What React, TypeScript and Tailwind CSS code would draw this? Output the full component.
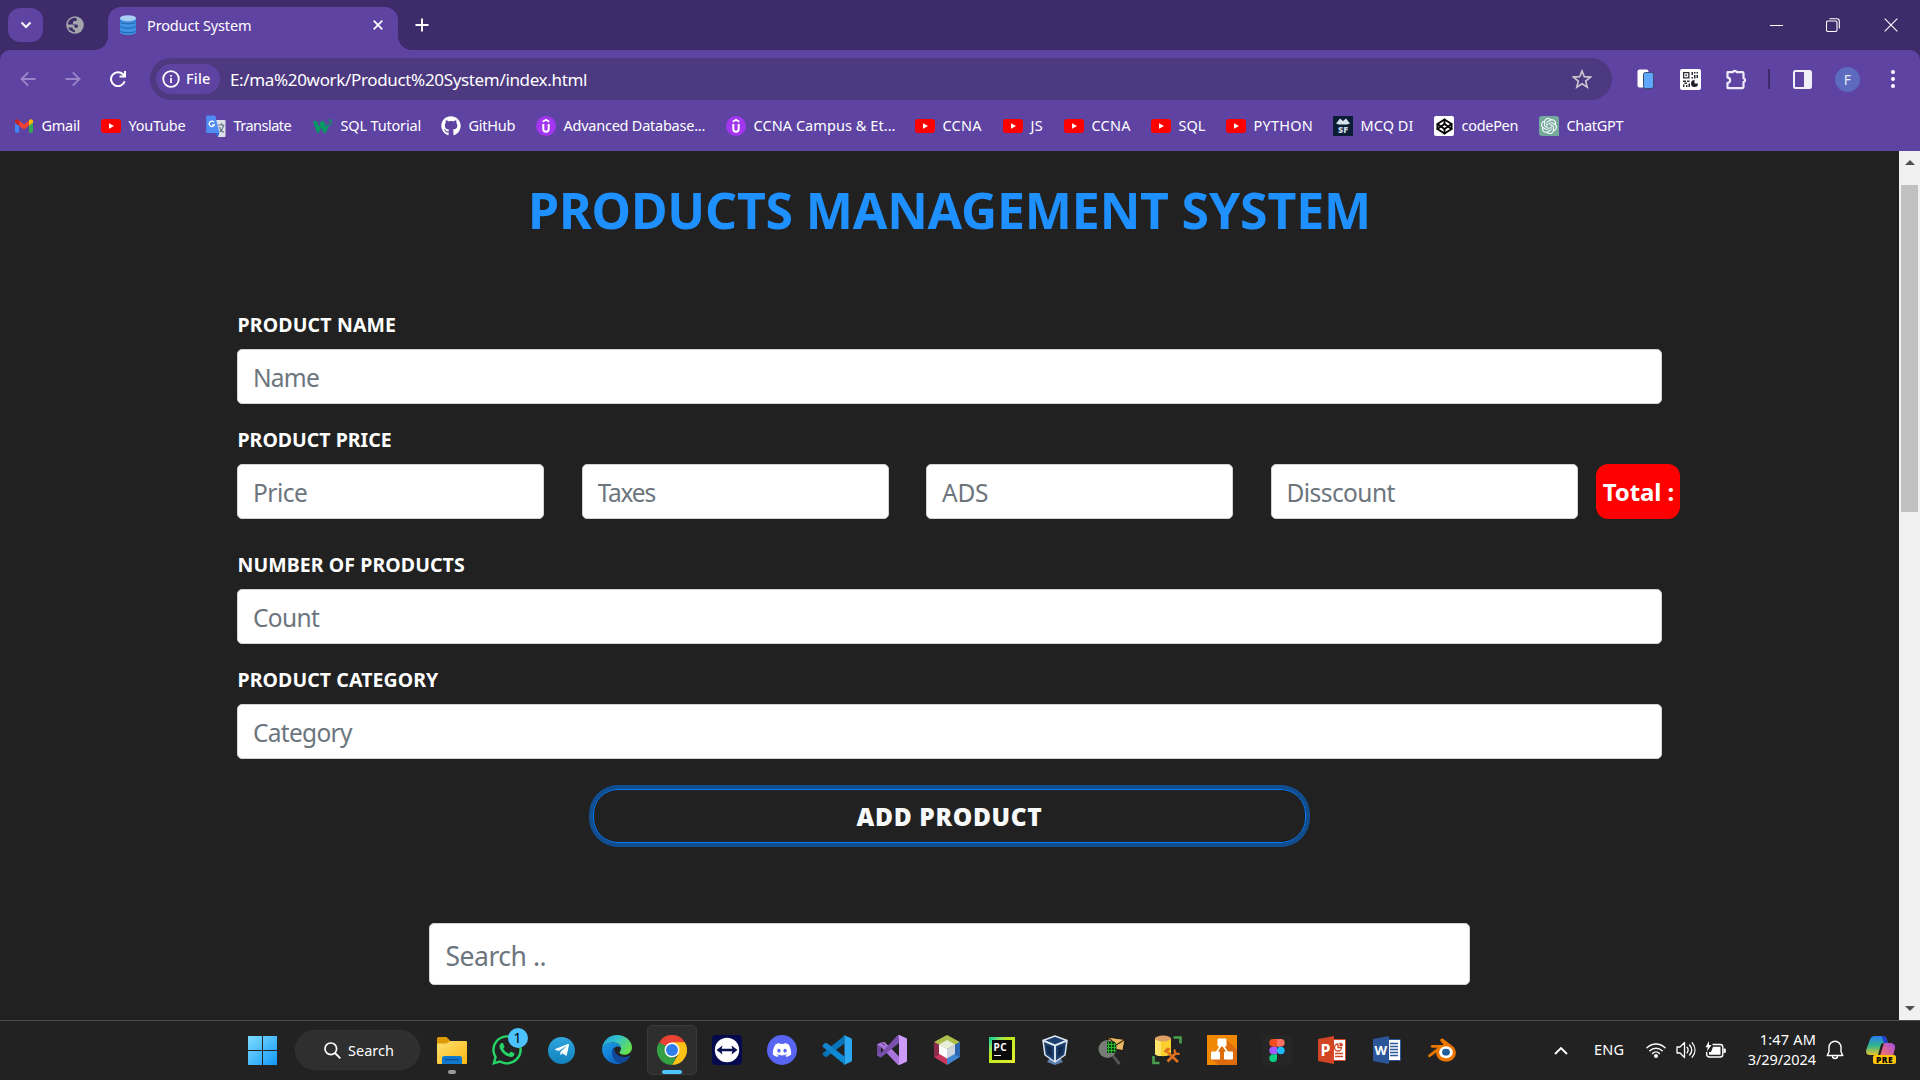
import type { ReactNode } from "react";
import { FaDiscord, FaGithub, FaTelegramPlane, FaWhatsapp } from "react-icons/fa";
import { SiOpenai } from "react-icons/si";
import { FiCodepen } from "react-icons/fi";

/* ---------- Bookmark icons ---------- */

const GmailIcon = () => (
  <svg viewBox="52 42 88 66" className="mr-px ml-px h-3.5 w-[18px]">
    <path fill="#4285f4" d="M58 108h14V74L52 59v43c0 3.32 2.69 6 6 6" />
    <path fill="#34a853" d="M120 108h14c3.32 0 6-2.69 6-6V59l-20 15" />
    <path fill="#fbbc04" d="M120 48v26l20-15v-8c0-7.42-8.47-11.65-14.4-7.2" />
    <path fill="#ea4335" d="M72 74V48l24 18 24-18v26L96 92" />
    <path fill="#c5221f" d="M52 51v8l20 15V48l-5.6-4.2c-5.94-4.45-14.4-.22-14.4 7.2" />
  </svg>
);

const YouTubeIcon = () => (
  <svg viewBox="0 0 20 14" className="h-3.5 w-5">
    <rect width="20" height="14" rx="3" fill="#ff0000" />
    <path d="M8 4.2v5.6L13 7z" fill="#fff" />
  </svg>
);

const TranslateIcon = () => (
  <svg viewBox="0 0 20 22" className="h-[22px] w-5">
    <path d="M8 5h10.5a1 1 0 0 1 1 1v15a1 1 0 0 1-1 1H12z" fill="#dfe3e8" />
    <path d="M9 18h4.5L12 22z" fill="#3367d6" />
    <path d="M12 10h6.500M15.500 8v2M17.600 10c-.5 3.500-2.400 5.500-4 6.500M13.300 12c.8 2.500 2.700 4.500 4.700 5.500" stroke="#6b7a87" strokeWidth="1.200" fill="none" />
    <path d="M1.200 0.500h8L13.500 18H1.200A1 1 0 0 1 .2 17V1.500a1 1 0 0 1 1-1z" fill="#4f8df5" />
    <path d="M8 7.200A2.700 2.700 0 1 0 8.400 9.800H6" stroke="#fff" strokeWidth="1.300" fill="none" />
  </svg>
);

const W3Icon = () => (
  <svg viewBox="0 0 20 17" className="h-[17px] w-5">
    <path d="M0 3h4l1.800 6L8 3h3l2 6 1-2.500 1.800 2L12.800 15h-2.300L8.300 9.500 5.800 15H4z" fill="#059862" />
    <path d="M15 2h3.500l-1.600 2c2.400 0 2.200 3-.2 3-1 0-1.700-.4-1.900-1" stroke="#059862" strokeWidth="1.100" fill="none" />
  </svg>
);

const UdemyIcon = () => (
  <svg viewBox="0 0 20 20" className="size-5">
    <circle cx="10" cy="10" r="10" fill="#a435f0" />
    <path d="M6.700 5.700 10 3.700l3.300 2" stroke="#fff" strokeWidth="1.700" fill="none" />
    <path d="M7.300 8v5a2.700 2.700 0 0 0 5.400 0V8" stroke="#fff" strokeWidth="2" fill="none" />
  </svg>
);

const McqIcon = () => (
  <span className="flex size-5 flex-col items-center justify-end bg-[#0b1d35] pb-[2px]">
    <svg viewBox="0 0 14 7" className="h-[7px] w-3.5">
      <path d="M0 5.500 4 .5l3 2.500 3-2.500 4 5-3 1H3z" fill="#d5e2ec" />
    </svg>
    <span className="text-[9px] leading-[9px] font-black text-[#c9d8e4]">SF</span>
  </span>
);

const CodepenIcon = () => (
  <span className="flex size-5 items-center justify-center rounded-[2px] bg-white text-black">
    <FiCodepen size={17} strokeWidth={2.600} />
  </span>
);

const ChatGptIcon = () => (
  <span className="flex size-5 items-center justify-center rounded-[3px] rounded-br-none bg-[#74aa9c] text-white">
    <SiOpenai size={16} />
  </span>
);

const bookmarks: { label: string; icon: ReactNode; box: string; track: string }[] = [
  { label: "Gmail", icon: <GmailIcon />, box: "w-[87px]", track: "tracking-[-0.25px]" },
  { label: "YouTube", icon: <YouTubeIcon />, box: "w-[105px]", track: "tracking-[-0.24px]" },
  { label: "Translate", icon: <TranslateIcon />, box: "w-[107px]", track: "tracking-[-0.52px]" },
  { label: "SQL Tutorial", icon: <W3Icon />, box: "w-[128px]", track: "tracking-[-0.17px]" },
  { label: "GitHub", icon: <FaGithub size={20} />, box: "w-[95px]", track: "tracking-[-0.25px]" },
  { label: "Advanced Database...", icon: <UdemyIcon />, box: "w-[190px]", track: "tracking-[-0.24px]" },
  { label: "CCNA Campus & Et...", icon: <UdemyIcon />, box: "w-[189px]", track: "tracking-[0.06px]" },
  { label: "CCNA", icon: <YouTubeIcon />, box: "w-[88px]", track: "tracking-[0.25px]" },
  { label: "JS", icon: <YouTubeIcon />, box: "w-[61px]", track: "tracking-[0.2px]" },
  { label: "CCNA", icon: <YouTubeIcon />, box: "w-[87px]", track: "tracking-[0.25px]" },
  { label: "SQL", icon: <YouTubeIcon />, box: "w-[75px]", track: "tracking-[0px]" },
  { label: "PYTHON", icon: <YouTubeIcon />, box: "w-[107px]", track: "tracking-[0.25px]" },
  { label: "MCQ DI", icon: <McqIcon />, box: "w-[101px]", track: "tracking-[0.06px]" },
  { label: "codePen", icon: <CodepenIcon />, box: "w-[105px]", track: "tracking-[-0.3px]" },
  { label: "ChatGPT", icon: <ChatGptIcon />, box: "w-[105px]", track: "tracking-[-0.3px]" },
];

/* ---------- Browser chrome ---------- */

function TabStrip() {
  return (
    <div className="flex h-[50px] items-start bg-[#3d2c69]">
      <button className="mt-2 ml-2 flex h-[34px] w-[35px] items-center justify-center rounded-xl bg-[#5e43a3]">
        <svg viewBox="0 0 12 8" className="h-2 w-3">
          <path d="M1.500 1.500 6 6l4.500-4.500" stroke="#fff" strokeWidth="2" fill="none" />
        </svg>
      </button>
      <svg viewBox="0 0 18 18" className="mt-4 ml-[23px] size-[18px]">
        <circle cx="9" cy="9" r="8.800" fill="#a3a5ab" />
        <path d="M9.800 1.800C5.500 1.400 1.900 4.700 1.800 8.500h4.500c1.500 0 2.300.8 2.300 2.200v1.100h1.800c1 0 1.500-.6 1.500-1.500V9.200c-.3-.6-.9-.8-1.500-.8H8.600c-1.200 0-1.700-.6-1.700-1.500 0-1.300.8-1.800 1.900-1.800h.6c1 0 1.400-.5 1.400-1.300 0-.5-.3-1.400-1-2z" fill="#3d2c69" />
        <path d="M2.200 11.500c1.200 2.800 3.600 4.600 6.800 4.700v-2c-1.600 0-2.500-.7-2.500-2.700z" fill="#3d2c69" />
      </svg>
      <div className="relative mt-[7px] ml-6 flex h-[43px] w-[290px] items-center rounded-t-[13px] bg-[#5e43a3] pb-[7px]">
        <svg viewBox="0 0 14 14" className="absolute bottom-0 -left-3.5 size-3.5">
          <path d="M14 0v14H0A14 14 0 0 0 14 0z" fill="#5e43a3" />
        </svg>
        <svg viewBox="0 0 14 14" className="absolute -right-3.5 bottom-0 size-3.5">
          <path d="M0 0v14h14A14 14 0 0 1 0 0z" fill="#5e43a3" />
        </svg>
        <svg viewBox="0 0 16 20" className="ml-3 h-5 w-4">
          <path d="M0 3v14c0 4 16 4 16 0V3z" fill="#3f92e2" />
          <path d="M0 6.500c1 3 15 3 16 0M0 11c1 3 15 3 16 0M0 15.500c1 3 15 3 16 0" stroke="#1f62ae" fill="none" />
          <ellipse cx="8" cy="3.200" rx="8" ry="3" fill="#a9cdf3" />
        </svg>
        <span className="mt-px ml-[11px] w-[215px] text-[14.5px] tracking-[-0.14px] whitespace-nowrap">Product System</span>
        <svg viewBox="0 0 10 10" className="ml-[10.500px] size-[10px]">
          <path d="M.7.7l8.600 8.600M9.300.7.7 9.300" stroke="#fff" strokeWidth="1.700" />
        </svg>
      </div>
      <svg viewBox="0 0 14 14" className="mt-[18px] ml-[17px] size-3.5">
        <path d="M7 .5v13M.5 7h13" stroke="#fff" strokeWidth="1.900" />
      </svg>
      <div className="ml-auto flex h-[50px] items-center">
        <svg viewBox="0 0 13 13" className="mr-[43px] size-[13px]">
          <path d="M0 6.500h13" stroke="#fff" />
        </svg>
        <svg viewBox="0 0 14 14" className="mr-[44px] size-3.5">
          <rect x=".5" y="3" width="10.500" height="10.500" rx="1.500" stroke="#fff" strokeWidth="1.100" fill="none" />
          <path d="M3.500.7H11A2.300 2.300 0 0 1 13.300 3v7.500" stroke="#fff" strokeWidth="1.100" fill="none" />
        </svg>
        <svg viewBox="0 0 14 14" className="mr-[22px] size-3.5">
          <path d="M.7.7l12.600 12.600M13.300.7.7 13.300" stroke="#fff" strokeWidth="1.100" />
        </svg>
      </div>
    </div>
  );
}

const QrIcon = () => (
  <svg viewBox="0 0 21 21" className="ml-[26px] size-[21px]">
    <rect width="21" height="21" rx="2" fill="#fff" />
    <path d="M3 3h6.500v6.500H3zM4.300 4.300v3.900h3.900V4.300zM5.500 5.500H7V7H5.500zM11.500 3h1.500v3h-1.500zM14 3h1.500v1.500H14zM16.500 3H18v1.500h-1.500zM14 6h1.500v3.500H14zM11.500 8H13v1.500h-1.500zM16.500 6H18v3h-1.500zM3 11.500h3V13H3zM7 11.500h2.500V13H7zM4.500 13.500h2.500V15H4.500zM3 15.500h1.500V18H3zM6 16h1.500v2H6zM8.500 14.500H10V18H8.500z" fill="#2b2f33" fillRule="evenodd" />
    <path d="M14.500 11v3.500H18a3.500 3.500 0 1 1-3.500-3.500z" fill="#1d1f22" />
  </svg>
);

function Toolbar() {
  return (
    <div className="bg-[#3d2c69]">
      <div className="rounded-t-[10px] bg-[#5e43a3]">
        <div className="flex h-[58px] items-center">
          <svg viewBox="0 0 16 16" className="ml-5 size-4">
            <path d="M15.500 8H1.500M8.200 1.300 1.500 8l6.700 6.700" stroke="#9985c9" strokeWidth="1.900" fill="none" />
          </svg>
          <svg viewBox="0 0 16 16" className="ml-[28.500px] size-4">
            <path d="M.5 8h14M7.800 1.300 14.500 8l-6.700 6.700" stroke="#9985c9" strokeWidth="1.900" fill="none" />
          </svg>
          <svg viewBox="0 0 16 16" className="ml-[29px] size-4">
            <path d="M14.700 10.300A7 7 0 1 1 13 3.200l1.700 1.700" stroke="#fff" strokeWidth="2" fill="none" />
            <path d="M16 0v6.500H9.500v-2H14V0z" fill="#fff" />
          </svg>
          <div className="ml-[24.500px] flex h-[42px] w-[1462px] items-center rounded-full bg-[#4c397f]">
            <div className="ml-1.5 flex h-[30px] w-16 items-center rounded-full bg-[#5e43a3]">
              <svg viewBox="0 0 18 18" className="ml-1.5 size-[18px]">
                <circle cx="9" cy="9" r="7.800" stroke="#fff" strokeWidth="1.800" fill="none" />
                <path d="M9 8v5M9 5v1.700" stroke="#fff" strokeWidth="1.700" />
              </svg>
              <span className="ml-[6px] text-[14.5px] font-medium tracking-[0.17px]">File</span>
            </div>
            <span className="mt-px ml-[10px] text-[17px] tracking-[-0.34px]">E:/ma%20work/Product%20System/index.html</span>
            <svg viewBox="0 0 20 20" className="mr-5 ml-auto size-5">
              <path d="m10 2 2.300 5.700 6.200.4-4.800 4 1.500 6L10 14.800l-5.200 3.300 1.500-6-4.800-4 6.200-.4z" stroke="#c9c4cf" strokeWidth="1.700" fill="none" />
            </svg>
          </div>
          <svg viewBox="0 0 17 20" className="ml-[25px] h-5 w-[17px]">
            <rect x=".5" y=".5" width="11" height="18" rx="2" fill="#fff" />
            <rect x="6.500" y="3.500" width="10" height="16" rx="2" fill="#5ea7fa" stroke="#3c4a6e" />
          </svg>
          <QrIcon />
          <svg viewBox="0 0 22 22" className="ml-6 size-[22px]">
            <path d="M2.500 4.200h5.300a2 2 0 0 1 3.800 0H17.500a1 1 0 0 1 1 1v5a2 2 0 0 1 0 3.900v5a1 1 0 0 1-1 1H2.500v-5.300a2.600 2.600 0 0 0 0-5.200z" stroke="#eeeaf6" strokeWidth="2.200" fill="none" strokeLinejoin="round" />
          </svg>
          <span className="ml-[21px] h-5 w-0.5 bg-[#3d2c69]" />
          <svg viewBox="0 0 19 19" className="ml-[23px] size-[19px]">
            <rect x="1" y="1" width="17" height="17" rx="1.500" stroke="#f1eff7" strokeWidth="2" fill="none" />
            <path d="M11 1h7v17h-7z" fill="#f1eff7" />
          </svg>
          <span className="ml-[23px] flex size-[25px] items-center justify-center rounded-full bg-[#5c6bc0] text-[14px] text-[#e6e8f8]">F</span>
          <svg viewBox="0 0 4 18" className="ml-[30.500px] h-[18px] w-1">
            <circle cx="2" cy="2" r="2" fill="#fff" />
            <circle cx="2" cy="9" r="2" fill="#fff" />
            <circle cx="2" cy="16" r="2" fill="#fff" />
          </svg>
        </div>
        <div className="flex h-[43px] items-center pb-[7px] pl-[14px] text-[14.5px]">
          {bookmarks.map((b, i) => (
            <div key={i} className={`flex shrink-0 items-center gap-[7.5px] whitespace-nowrap ${b.box}`}>
              {b.icon}
              <span className={b.track}>{b.label}</span>
            </div>
          ))}
        </div>
      </div>
    </div>
  );
}

/* ---------- Web page ---------- */

const inputBase =
  "block h-[55px] rounded-[5px] border border-[#ced4da] bg-white pt-[2px] pl-[15px] text-[24.5px] text-[#495057] outline-none placeholder:text-[#6c757d] placeholder:opacity-100";

function Label({ children, track }: { children: ReactNode; track: string }) {
  return <label className={`mb-[9px] block pt-px pl-[0.5px] text-[19.5px] leading-[30px] font-bold text-white ${track}`}>{children}</label>;
}

const priceFields = [
  { name: "Price", track: "tracking-[-0.51px]" },
  { name: "Taxes", track: "tracking-[-1.2px]" },
  { name: "ADS", track: "tracking-[-0.27px]" },
  { name: "Disscount", track: "tracking-[-0.57px]" },
];

function Page() {
  return (
    <main className="flex flex-1 flex-col bg-[#212121]">
      <h1 className="mt-[29px] text-center text-[50px] leading-[61px] font-bold tracking-[-0.18px] text-[#1e90ff]">
        PRODUCTS MANAGEMENT SYSTEM
      </h1>
      <form className="mx-auto mt-[68px] w-[1425px]">
        <Label track="tracking-[0.15px]">PRODUCT NAME</Label>
        <input placeholder="Name" className={`w-full tracking-[-0.76px] ${inputBase}`} />
        <div className="h-5" />
        <Label track="tracking-[0px]">PRODUCT PRICE</Label>
        <div className="-mr-[18px] flex">
          {priceFields.map((f) => (
            <input key={f.name} placeholder={f.name} className={`mr-[37.5px] w-[307px] shrink-0 last-of-type:mr-[18px] ${f.track} ${inputBase}`} />
          ))}
          <div className="flex h-[55px] w-[84px] shrink-0 items-center justify-center rounded-xl bg-[#ff0000] pl-[2px] text-[24px] font-bold tracking-[-0.1px] whitespace-nowrap text-white">
            Total :
          </div>
        </div>
        <div className="h-[30px]" />
        <Label track="tracking-[0.08px]">NUMBER OF PRODUCTS</Label>
        <input placeholder="Count" className={`w-full tracking-[-0.65px] ${inputBase}`} />
        <div className="h-5" />
        <Label track="tracking-[0.08px]">PRODUCT CATEGORY</Label>
        <input placeholder="Category" className={`w-full tracking-[-0.7px] ${inputBase}`} />
        <button
          type="button"
          className="mx-auto mt-[30px] block h-[54px] w-[713px] rounded-[25px] border border-[#007bff] pt-[2px] text-[24.5px] font-black tracking-[0.65px] text-[#f8f9fa] shadow-[0_0_0_4px_rgba(0,123,255,0.5)]"
        >
          ADD PRODUCT
        </button>
      </form>
      <input
        placeholder="Search .."
        className="mx-auto mt-[80px] block h-[62px] w-[1041px] rounded-[5px] border border-[#ced4da] bg-white pt-[3px] pl-[15.500px] text-[26.5px] tracking-[-0.48px] outline-none placeholder:text-[#6c757d] placeholder:opacity-100"
      />
    </main>
  );
}

function Scrollbar() {
  return (
    <div className="flex w-[21px] flex-col items-center bg-[#f1f1f1]">
      <svg viewBox="0 0 10 5" className="mt-[9px] h-[5px] w-[10px]">
        <path d="M0 5 5 0l5 5z" fill="#505050" />
      </svg>
      <div className="mt-5 h-[327px] w-[17px] bg-[#c1c1c1]" />
      <svg viewBox="0 0 10 5" className="mt-auto mb-[9px] h-[5px] w-[10px]">
        <path d="M0 0h10L5 5z" fill="#505050" />
      </svg>
    </div>
  );
}

/* ---------- Taskbar icons ---------- */

const FolderIcon = () => (
  <svg viewBox="0 0 30 27" className="h-[27px] w-[30px]">
    <defs>
      <linearGradient id="folder" x1="0" y1="0" x2="1" y2="1">
        <stop offset="0" stopColor="#ffdf70" />
        <stop offset="1" stopColor="#fbb912" />
      </linearGradient>
    </defs>
    <path d="M0 1.500A1.500 1.500 0 0 1 1.500 0h8l3.500 3.500V12H0z" fill="#dd9a07" />
    <path d="M0 6.500h9.500L13 4h16a1 1 0 0 1 1 1v21a1 1 0 0 1-1 1H1a1 1 0 0 1-1-1z" fill="url(#folder)" />
    <path d="M5 27v-5.500A2.500 2.500 0 0 1 7.500 19h15a2.500 2.500 0 0 1 2.500 2.500V27z" fill="#1178cf" />
    <path d="M8.500 22.700h13" stroke="#0b4f94" strokeWidth="1.200" strokeLinecap="round" />
  </svg>
);

const WhatsAppIcon = () => (
  <span className="relative">
    <FaWhatsapp size={34} color="#25d366" />
    <span className="absolute -top-[5px] left-[18px] flex size-5 items-center justify-center rounded-full bg-[#4cc2ff] text-[14px] leading-none text-black">1</span>
  </span>
);

const TelegramIcon = () => (
  <span className="flex size-[27px] items-center justify-center rounded-full bg-[#1f93d1] bg-gradient-to-b from-[#2fa6dd] to-[#1181bd]">
    <FaTelegramPlane size={16} color="#fff" />
  </span>
);

const EdgeIcon = () => (
  <svg viewBox="0 0 30 30" className="size-[30px]">
    <defs>
      <linearGradient id="edge-top" x1="0" y1="0" x2="1" y2=".5">
        <stop offset="0" stopColor="#1f9de0" />
        <stop offset=".5" stopColor="#33c3c9" />
        <stop offset="1" stopColor="#66e052" />
      </linearGradient>
      <linearGradient id="edge-body" x1="0" y1="0" x2=".6" y2="1">
        <stop offset="0" stopColor="#1fa0e6" />
        <stop offset="1" stopColor="#0b66c5" />
      </linearGradient>
    </defs>
    <path d="M0 14C.5 6 7 0 15 0c8.500 0 15 6 15 12.500 0 4.500-3.500 7.300-7.500 7.300-3.500 0-5-1.300-5-2.300s1.500-1.500 1.500-4C19 10 15.500 7.500 11 7.500 5 7.500 1 10.500 0 14z" fill="url(#edge-top)" />
    <path d="M0 14.500C.6 10.500 5 7.500 10.500 7.500c5 0 8.500 2.700 8.500 5.600-2-3-7.500-2-8.500 3.400-1 6 4 12 10 11.500A15 15 0 0 1 0 14.500z" fill="url(#edge-body)" />
    <path d="M12 12.600c-1.400 1.200-2.200 3.400-2 5.400.4 5.500 5 10 10 10 3.500-1.200 6.500-3.500 8-6.500.3-.7-.2-1-.8-.7-1.500.8-3.500 1.200-5.500 1.200-5.500 0-10-4.500-9.700-9.400z" fill="#11489c" />
  </svg>
);

const ChromeIcon = () => (
  <svg viewBox="0 0 48 48" className="size-[30px]">
    <path d="M24 24 3.200 12A24 24 0 0 1 44.800 12z" fill="#ea4335" />
    <path d="M24 12h20.800A24 24 0 0 1 24 48l10.400-18z" fill="#fbc116" />
    <path d="M3.200 12 13.600 30 24 36h6.900L24 48A24 24 0 0 1 3.200 12z" fill="#34a044" />
    <path d="M3.200 12 13.600 30 20 20z" fill="#34a044" />
    <path d="M24 12h20.800L34.400 30z" fill="#fbc116" />
    <circle cx="24" cy="24" r="12" fill="#fff" />
    <circle cx="24" cy="24" r="9.600" fill="#2f7de9" />
  </svg>
);

const TeamViewerIcon = () => (
  <svg viewBox="0 0 30 30" className="size-[30px]">
    <rect width="30" height="30" rx="4" fill="#050a4f" />
    <circle cx="15" cy="15" r="12.200" fill="#fff" />
    <path d="m4.500 15 6-4.500-.8 3.200h10.600l-.8-3.200 6 4.500-6 4.500.8-3.200H9.700l.8 3.200z" fill="#0a1152" />
  </svg>
);

const DiscordIcon = () => (
  <span className="flex size-[30px] items-center justify-center rounded-full bg-[#5865f2]">
    <FaDiscord size={20} color="#fff" />
  </span>
);

const VsCodeIcon = () => (
  <svg viewBox="0 0 30 30" className="size-[30px]">
    <path d="M.8 10.300 3 8.200q.8-.6 1.800 0L22.500 21.500V29.500L1 12q-.9-.9-.2-1.700z" fill="#0d8bd9" />
    <path d="M.8 19.700 3 21.800q.8.6 1.800 0L22.500 8.500V.5L1 18q-.9.900-.2 1.700z" fill="#0a74b8" />
    <path d="m.8 10.300 2.200-2.100q.8-.6 1.800 0L14 15l-3.500 4.500z" fill="#1384cc" />
    <path d="M21.200.3Q22 0 23 .4l6 2.900q1 .5 1 1.500v20.400q0 1-1 1.500l-6 2.900q-1 .4-1.800-.3 1.300.4 1.300-1.300V2q0-1.400-1.300-1.700z" fill="#2aa8f2" />
  </svg>
);

const VisualStudioIcon = () => (
  <svg viewBox="0 0 30 30" className="size-[30px]">
    <path d="M0 9.500 4 7.500v15l-4-2z" fill="#6d4a9e" />
    <path d="M4 7.500 7 9l14.500 20.500V21L7.500 7z" fill="#b07de0" />
    <path d="M0 9.500 4 7.500 22 22v7.500L20 29 4 12z" fill="#a873db" />
    <path d="m0 20.500 4 2L22 8V.5L20 1 4 18v-1z" fill="#7a52ad" />
    <path d="M20 1 22.500 0 30 3.500v23L22.500 30 20 29q2 .5 2-1.500v-25Q22 .5 20 1z" fill="#cf9bfb" />
  </svg>
);

const NetBeansIcon = () => (
  <svg viewBox="0 0 26 30" className="h-[30px] w-[26px]">
    <path d="M13 0 26 7 13 14 0 7z" fill="#aebf4b" />
    <path d="M0 7v15l13 8V15z" fill="#c9375c" />
    <path d="M26 7v15l-13 8V15z" fill="#3f86d2" />
    <path d="m0 7 5 3v10l-5 2z" fill="#8d2c4a" />
    <path d="m26 7-5 3v10l5 2z" fill="#2b66b0" />
    <path d="m13 5 8 4.500-8 4.500-8-4.500z" fill="#e9eedb" />
    <path d="M5 9.500v9.300l8 4.700V14z" fill="#fff" />
    <path d="M21 9.500v9.300l-8 4.700V14z" fill="#cfd5dc" />
  </svg>
);

const PyCharmIcon = () => (
  <span className="flex size-[26px] items-center justify-center bg-gradient-to-br from-[#21d789] from-10% via-[#b5ea1e] via-35% to-[#e8ee2c]">
    <span className="flex size-5 flex-col bg-[#0a0a0a] pt-[2px] pl-[2px]">
      <span className="text-[10px] leading-[10px] font-bold tracking-[0.5px]">PC</span>
      <span className="mt-[3px] h-px w-[7px] bg-white" />
    </span>
  </span>
);

const VirtualBoxIcon = () => (
  <svg viewBox="0 0 26 30" className="mr-[3px] h-[30px] w-[26px]">
    <path d="M7 24h12l2 3-8 3-8-3z" fill="#5f7fae" />
    <path d="M13 1 25 5.500 23 20l-10 7L3 20 1 5.500z" fill="#1d3f6e" stroke="#dce6f2" strokeWidth="1.500" strokeLinejoin="round" />
    <path d="m1 5.500 12 5 12-5M13 10.500V27" stroke="#dce6f2" strokeWidth="1.900" fill="none" />
    <path d="m4.500 10.500 5.500 2.300v8.400l-4.500-3zM21.500 10.500 16 12.800v8.400l4.500-3z" fill="#13294d" />
  </svg>
);

const PacketTracerIcon = () => (
  <svg viewBox="0 0 28 30" className="h-[30px] w-7">
    <path d="m10 2 17 2.500-2 11-14-2z" fill="#e8b863" stroke="#15120c" />
    <path d="m10 2 8 8 9-5.500" stroke="#3a2c12" fill="none" strokeWidth="1.100" />
    <circle cx="9.500" cy="14" r="9" fill="#777b76" />
    <path d="M9 6.500h7.500c2.500 3.500 2.500 8 .5 11.500H9z" fill="#0c3d11" />
    <path d="M10.500 7v11M13.500 7v11M16.500 8v9M9 9.500h8.500M9 12.500h9M9 15.500h8.500" stroke="#27c32f" strokeWidth=".9" />
    <path d="m15 21 6.500 8" stroke="#555" strokeWidth="2.800" />
  </svg>
);

const SqlServerIcon = () => (
  <svg viewBox="0 0 30 30" className="size-[30px]">
    <path d="M21.500 2.500h7v6M1.500 21v7h6" stroke="#47a04b" strokeWidth="2.600" fill="none" />
    <path d="M3 3.500v15c0 3.500 16 3.500 16 0v-15z" fill="#fad02c" />
    <path d="M3 3.500v15c0 2 4 2.600 6 2.600v-15z" fill="#fde36b" />
    <ellipse cx="11" cy="3.500" rx="8" ry="3" fill="#dfa066" />
    <path d="m15.500 26.500 9-9M16 17.500l10 9.500" stroke="#e2711d" strokeWidth="2.600" />
    <path d="m11.500 16 4-3.500 3 1-3.500 5z" fill="#e2711d" />
    <path d="M23 14.500c-1.500 3 1.500 5.500 4.500 4" stroke="#e2711d" strokeWidth="2" fill="none" />
  </svg>
);

const DrawIoIcon = () => (
  <svg viewBox="0 0 30 30" className="size-[30px]">
    <rect width="30" height="30" fill="#f08705" />
    <path d="m19 4 11 11v15H11l-6-6z" fill="#df6c0c" />
    <path d="m15 9-6 9M15 9l6 9" stroke="#fff" strokeWidth="1.600" />
    <rect x="10.500" y="3.500" width="9" height="8" rx="1" fill="#fff" />
    <rect x="4" y="16.500" width="9" height="8" rx="1" fill="#fff" />
    <rect x="17" y="16.500" width="9" height="8" rx="1" fill="#fff" />
  </svg>
);

const FigmaIcon = () => (
  <span className="flex size-[30px] items-center justify-center rounded-[3px] bg-[#262626]">
    <svg viewBox="0 0 16 24" className="h-[23px] w-4">
      <path d="M8 0H4a4 4 0 0 0 0 8h4z" fill="#f24e1e" />
      <path d="M8 0h4a4 4 0 0 1 0 8H8z" fill="#ff7262" />
      <path d="M8 8H4a4 4 0 0 0 0 8h4z" fill="#a259ff" />
      <circle cx="12" cy="12" r="4" fill="#1abcfe" />
      <path d="M4 16h4v4a4 4 0 1 1-4-4z" fill="#0acf83" />
    </svg>
  </span>
);

const PowerPointIcon = () => (
  <span className="relative flex">
    <svg viewBox="0 0 28 28" className="size-7">
      <rect x="14" y="3.500" width="13.500" height="21" rx="1" fill="#fff" stroke="#d24625" />
      <path d="M20 8a3.500 3.500 0 1 0 3.500 3.500H20zM17 17.500h8M17 20.500h8" stroke="#d24625" strokeWidth="1.300" fill="none" />
      <path d="M21.500 6.500v3.500H25A3.500 3.500 0 0 0 21.500 6.500z" fill="#d24625" />
      <path d="m0 3 16-3v28L0 25z" fill="#d24625" />
    </svg>
    <span className="absolute top-0 left-[3px] text-[16px] leading-7 font-bold">P</span>
  </span>
);

const WordIcon = () => (
  <span className="relative flex">
    <svg viewBox="0 0 28 28" className="size-7">
      <rect x="14" y="3.500" width="13.500" height="21" rx="1" fill="#fff" stroke="#2b579a" />
      <path d="M17 7.500h8M17 10.500h8M17 13.500h8M17 16.500h8M17 19.500h8" stroke="#2b579a" strokeWidth="1.400" />
      <path d="m0 3 16-3v28L0 25z" fill="#2b579a" />
    </svg>
    <span className="absolute top-0 left-[2px] text-[13px] leading-7 font-bold">W</span>
  </span>
);

const BlenderIcon = () => (
  <svg viewBox="0 0 28 24" className="h-6 w-7">
    <path d="M12.500 1.200c.7-1 1.900-.9 2.600-.4L25 8.500c4 3.500 3.500 9.500 0 12.500-3.500 3.300-9.500 3.500-13.500.5-2.500-2-3.500-4.500-3.300-7L2.500 18.800C.8 20-.8 18 .6 16.800L9.500 9.700H4.200c-1.900 0-1.900-2.700 0-2.700h11.500l-2.900-3.500c-.6-.7-.8-1.500-.3-2.300z" fill="#ea7600" />
    <ellipse cx="18" cy="14.200" rx="6.800" ry="6" fill="#fff" />
    <ellipse cx="18" cy="14.200" rx="3.900" ry="3.400" fill="#1f5d9c" />
  </svg>
);

const apps: ReactNode[] = [
  <FolderIcon />, <WhatsAppIcon />, <TelegramIcon />, <EdgeIcon />, <ChromeIcon />, <TeamViewerIcon />, <DiscordIcon />,
  <VsCodeIcon />, <VisualStudioIcon />, <NetBeansIcon />, <PyCharmIcon />, <VirtualBoxIcon />, <PacketTracerIcon />,
  <SqlServerIcon />, <DrawIoIcon />, <FigmaIcon />, <PowerPointIcon />, <WordIcon />, <BlenderIcon />,
];

function SystemTray() {
  return (
    <div className="ml-auto flex items-center">
      <svg viewBox="0 0 14 9" className="h-[9px] w-3.5">
        <path d="m1 8 6-6 6 6" stroke="#fff" strokeWidth="1.900" fill="none" />
      </svg>
      <span className="ml-[26px] w-[30px] text-[14.5px] tracking-[0.21px]">ENG</span>
      <svg viewBox="0 0 20 16" className="ml-[22px] h-4 w-5" fill="none" stroke="#fff" strokeWidth="1.400" strokeLinecap="round">
        <path d="M1 5.800a12.700 12.700 0 0 1 18 0M3.800 8.800a8.800 8.800 0 0 1 12.400 0M6.500 11.500a5 5 0 0 1 7 0" />
        <circle cx="10" cy="14" r="1.300" fill="#fff" />
      </svg>
      <svg viewBox="0 0 20 18" className="ml-[10px] h-[18px] w-5" fill="none" stroke="#fff" strokeWidth="1.300" strokeLinecap="round" strokeLinejoin="round">
        <path d="M1 6v6h3l4.500 4.500v-15L4 6z" />
        <path d="M11 6.200c1.400 1.700 1.400 3.900 0 5.600M13.600 4c2.600 3 2.600 7 0 10M16.200 1.800c3.700 4.400 3.700 10 0 14.400" />
      </svg>
      <svg viewBox="0 0 21 18" className="ml-[9px] h-[18px] w-[21px]">
        <path d="M7.500 3.500h7.800A2.500 2.500 0 0 1 17.800 6v7.500a2.500 2.500 0 0 1-2.500 2.500H4.200a2.500 2.500 0 0 1-2.500-2.500V11" stroke="#fff" strokeWidth="1.400" fill="none" />
        <path d="M8 5.800h7.500v8H4V11h2z" fill="#fff" />
        <path d="M18.500 7.500h1.300a1 1 0 0 1 1 1V11a1 1 0 0 1-1 1h-1.300z" fill="#fff" />
        <path d="M4 0 .5 6.200h2.300L1.800 10.500 6.500 4H4z" fill="#fff" />
      </svg>
      <div className="ml-[21px] w-[69px] pb-[3px] text-right text-[14.5px] leading-[20px]">
        <div className="tracking-[0.2px]">1:47 AM</div>
        <div className="tracking-[-0.07px]">3/29/2024</div>
      </div>
      <svg viewBox="0 0 18 20" className="ml-[10px] h-5 w-[18px]" fill="none" stroke="#fff" strokeWidth="1.400" strokeLinejoin="round">
        <path d="M9 1.200A6 6 0 0 0 3 7.200v4.500L1.200 15.500h15.600L15 11.700V7.200a6 6 0 0 0-6-6z" />
        <path d="M6.500 16a2.500 2.500 0 0 0 5 0" />
      </svg>
      <div className="relative mr-6 ml-[22px] h-[28px] w-[30px]">
        <svg viewBox="0 0 30 28" className="h-7 w-[30px]">
          <defs>
            <linearGradient id="pilot-a" x1="0" y1="0" x2="0" y2="1">
              <stop offset="0" stopColor="#2a7df0" />
              <stop offset=".5" stopColor="#2fb58f" />
              <stop offset="1" stopColor="#e8c52a" />
            </linearGradient>
            <linearGradient id="pilot-b" x1="1" y1="0" x2="0" y2="1">
              <stop offset="0" stopColor="#a04be8" />
              <stop offset="1" stopColor="#ff7a5c" />
            </linearGradient>
          </defs>
          <path d="M18 7h7a4 4 0 0 1 4 5l-2 8H14z" fill="url(#pilot-b)" />
          <path d="M8.500 0H17c2 0 3 1 3.600 3L22 7h-4c-2 0-3 1-3.500 3L12 19H4c-3 0-4.500-2-3.800-5L4 3.500C4.700 1.500 6.500 0 8.500 0z" fill="url(#pilot-a)" />
          <path d="M15.500 0H17c2 0 3 1 3.600 3L22 7h-4z" fill="#2242c9" />
        </svg>
        <span className="absolute right-0 bottom-0 flex h-[9px] w-[23px] items-center justify-center rounded-[2px] bg-[#ffc60a] text-[8.5px] leading-[9px] font-black tracking-[0.4px] text-black">
          PRE
        </span>
      </div>
    </div>
  );
}

function Taskbar() {
  return (
    <footer className="flex h-[60px] items-center border-t border-[#4a4a4a] bg-[#222222] pb-px">
      <svg viewBox="0 0 29 29" className="ml-[248px] size-[29px]">
        <defs>
          <linearGradient id="win" x1="0" y1="0" x2="1" y2="1">
            <stop offset="0" stopColor="#7fdcff" />
            <stop offset="1" stopColor="#1399f5" />
          </linearGradient>
        </defs>
        <path d="M0 0h14v14H0zM15 0h14v14H15zM0 15h14v14H0zM15 15h14v14H15z" fill="url(#win)" />
      </svg>
      <div className="ml-[18px] flex h-10 w-[125px] items-center rounded-full border border-[#333] bg-[#2f2f2f]">
        <svg viewBox="0 0 17 17" className="ml-7 size-[17px]">
          <circle cx="6.800" cy="6.800" r="5.800" stroke="#fff" strokeWidth="1.700" fill="none" />
          <path d="m11 11 5.300 5.300" stroke="#fff" strokeWidth="1.900" />
        </svg>
        <span className="mt-px ml-[7px] text-[14.5px]">Search</span>
      </div>
      <div className="ml-[4px] flex">
        {apps.map((icon, i) => (
          <div key={i} className="flex w-[55px] justify-center">
            <div
              className={`relative flex h-[50px] w-[50px] items-center justify-center rounded-[5px] ${
                i === 4 ? "border border-[#393939] bg-[#2e2e2e]" : ""
              }`}
            >
              {icon}
              {i === 0 && <span className="absolute bottom-px h-1 w-2 rounded-full bg-[#9a9a9a]" />}
              {i === 4 && <span className="absolute bottom-0 h-1 w-5 rounded-full bg-[#4cc2ff]" />}
            </div>
          </div>
        ))}
      </div>
      <SystemTray />
    </footer>
  );
}

export default function App() {
  return (
    <div className="flex h-[1080px] w-[1920px] flex-col overflow-hidden bg-[#212121] font-['Noto_Sans',sans-serif] text-white">
      <TabStrip />
      <Toolbar />
      <div className="flex flex-1">
        <Page />
        <Scrollbar />
      </div>
      <Taskbar />
    </div>
  );
}
